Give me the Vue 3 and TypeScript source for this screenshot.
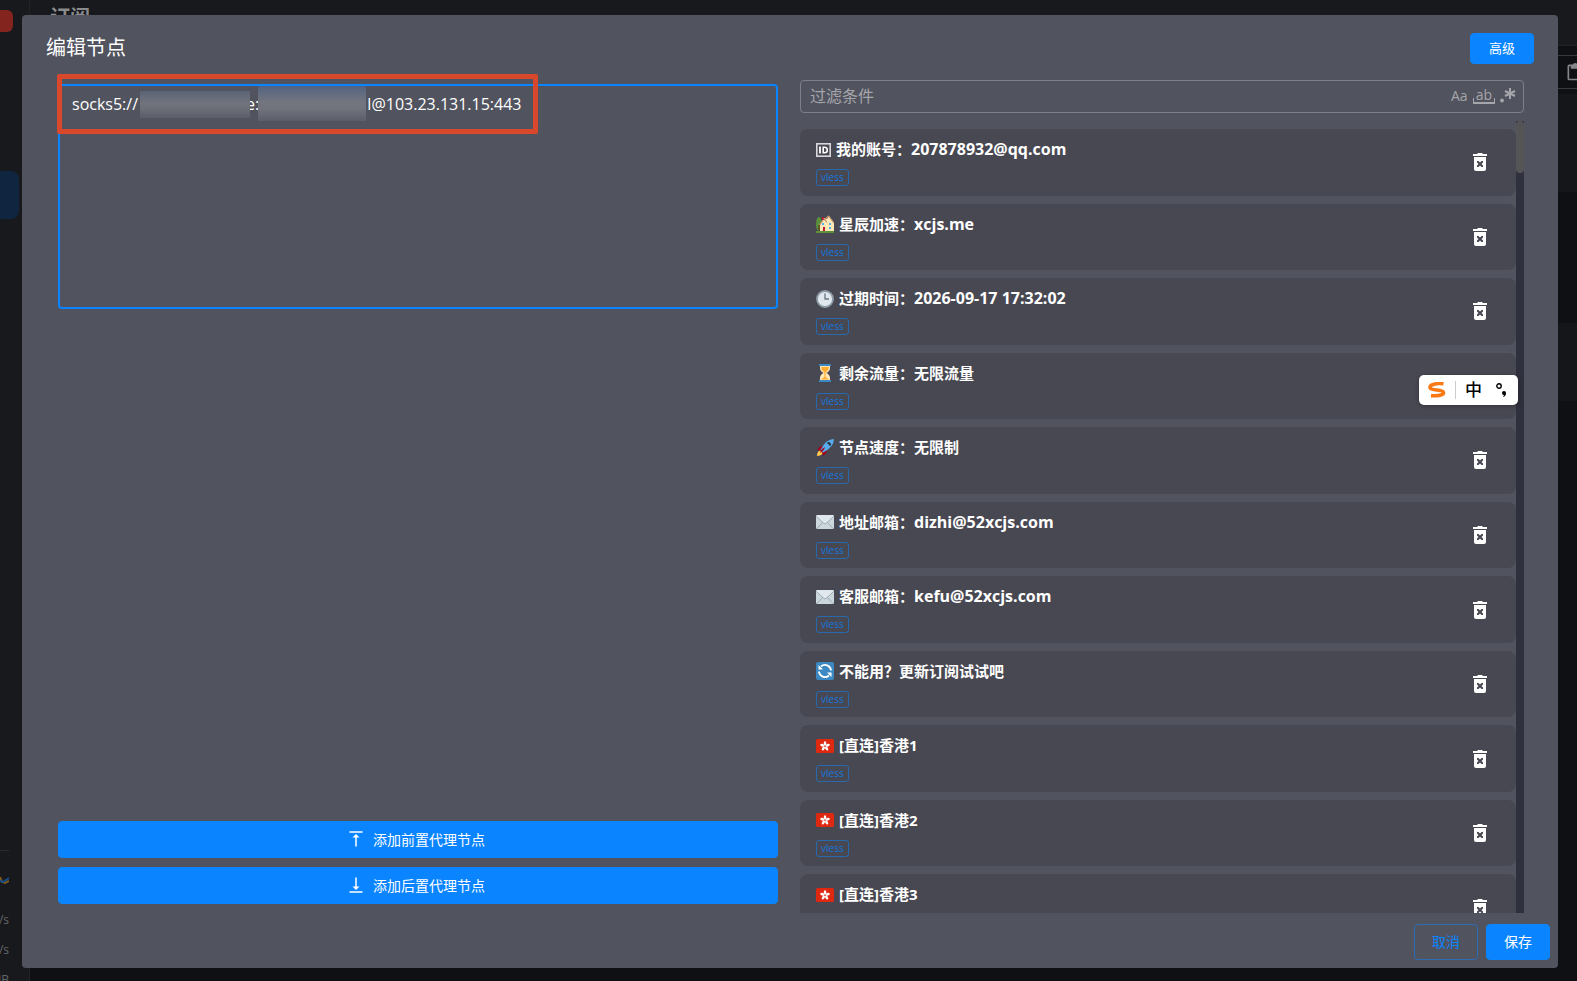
<script setup lang="ts">
import { ref } from 'vue'

interface ProxyNode {
  icon: string
  name: string
  value?: string
}

const link = ref('socks5://' + '\u00a0'.repeat(26) + 'e:' + '\u00a0'.repeat(26) + 'l@103.23.131.15:443')
const filter = ref('')

const nodes: ProxyNode[] = [
  { icon: 'id', name: '我的账号：', value: '207878932@qq.com' },
  { icon: 'house', name: '星辰加速：', value: 'xcjs.me' },
  { icon: 'clock', name: '过期时间：', value: '2026-09-17 17:32:02' },
  { icon: 'hourglass', name: '剩余流量：无限流量' },
  { icon: 'rocket', name: '节点速度：无限制' },
  { icon: 'mail', name: '地址邮箱：', value: 'dizhi@52xcjs.com' },
  { icon: 'mail', name: '客服邮箱：', value: 'kefu@52xcjs.com' },
  { icon: 'refresh', name: '不能用？更新订阅试试吧' },
  { icon: 'flag', name: '[直连]香港1' },
  { icon: 'flag', name: '[直连]香港2' },
  { icon: 'flag', name: '[直连]香港3' },
]
</script>

<template>
  <div class="app">
    <div class="backdrop" aria-hidden="true">
      <div class="side">
        <span class="close-chip"></span>
        <span class="nav-chip"></span>
        <div class="traffic">
          <svg class="wave" viewBox="0 0 9 16"><path d="M0 4l2 5 3 1 4-2" stroke="#7a5a1c" stroke-width="2" fill="none" /><path d="M0 8l3 1 6-4" stroke="#154c8c" stroke-width="2" fill="none" /></svg>
          <span>/s</span>
          <span>/s</span>
          <span>IB</span>
        </div>
      </div>
      <div class="main">
        <div class="page-head">订阅</div>
        <div class="toolbar">
          <svg viewBox="0 0 24 24"><path d="M19 3h-4.200a3 3 0 0 0-5.600 0H5a2 2 0 0 0-2 2v15a2 2 0 0 0 2 2h14a2 2 0 0 0 2-2V5a2 2 0 0 0-2-2zm0 17H5V5h2v3h10V5h2z" fill="#85868a" /></svg>
        </div>
        <div class="strip"></div>
        <div class="card-a"></div>
        <div class="card-b"></div>
      </div>
    </div>

    <section class="dialog" role="dialog" aria-labelledby="dialog-title">
      <header class="head">
        <h2 id="dialog-title">编辑节点</h2>
        <button type="button" class="btn small">高级</button>
      </header>

      <div class="body">
        <div class="left">
          <div class="editor">
            <textarea v-model="link" aria-label="节点链接" spellcheck="false"></textarea>
            <span class="mask mask-user"></span>
            <span class="mask mask-pass"></span>
            <span class="frame"></span>
          </div>
          <div class="stack">
            <button type="button" class="btn wide">
              <svg viewBox="0 0 18 18"><path d="M3 2h12M9 16V6" stroke="#fff" stroke-width="1.500" stroke-linecap="round" fill="none" /><path d="M9 4l3.500 3.500h-7z" fill="#fff" /></svg>
              添加前置代理节点
            </button>
            <button type="button" class="btn wide">
              <svg viewBox="0 0 18 18"><path d="M3 16h12M9 2v10" stroke="#fff" stroke-width="1.500" stroke-linecap="round" fill="none" /><path d="M9 14l3.500-3.500h-7z" fill="#fff" /></svg>
              添加后置代理节点
            </button>
          </div>
        </div>

        <div class="right">
          <div class="filter">
            <input v-model="filter" type="text" placeholder="过滤条件" aria-label="过滤条件" />
            <button type="button" class="opt" aria-label="区分大小写">Aa</button>
            <button type="button" class="opt word" aria-label="全字匹配">ab</button>
            <button type="button" class="opt" aria-label="正则表达式">
              <svg viewBox="0 0 16 16"><circle cx="2" cy="12.500" r="1.900" fill="#a5a6ab" /><path d="M10 0v11M5 3l10 5M15 3L5 8" stroke="#a5a6ab" stroke-width="2" /></svg>
            </button>
          </div>

          <div class="list">
            <ul>
              <li v-for="node in nodes" :key="node.name + node.value">
                <div class="info">
                  <div class="name">
                    <svg v-if="node.icon === 'id'" class="emoji narrow" viewBox="0 0 15 18"><rect x="0.800" y="2.800" width="13.400" height="12.400" fill="none" stroke="#d9d6dc" stroke-width="1.600" /><path d="M4 5.500v7" stroke="#fff" stroke-width="1.800" /><path d="M7.200 6.200v5.600h1.300q2.800 0 2.800-2.800t-2.800-2.800z" fill="none" stroke="#fff" stroke-width="1.600" /></svg>
                    <svg v-else-if="node.icon === 'house'" class="emoji" viewBox="0 0 18 18"><ellipse cx="3" cy="9" rx="3" ry="7" fill="#5c913b" /><path d="M2.600 10h1v6h-1z" fill="#662113" /><path d="M4 10l4-7 3 1 2-3 5 7v8H4z" fill="#ffe8b6" /><path d="M3.500 10L8 3.500l3 4M8 5l4.500-4L18 8" stroke="#c1946c" stroke-width="1.200" fill="none" /><path d="M6 2h1.600v3H6z" fill="#be1931" /><path d="M6 8h2v2H6zm7 0h2v2h-2zm0 4h2v2h-2z" fill="#55acee" /><path d="M7 12h2v4H7z" fill="#be1931" /><path d="M0 16h18v2H0z" fill="#5c913b" /></svg>
                    <svg v-else-if="node.icon === 'clock'" class="emoji" viewBox="0 0 18 18"><circle cx="9" cy="9" r="8" fill="#e1e8ed" stroke="#8d9da8" stroke-width="1.800" /><path d="M9 3.500V9h4" stroke="#66757f" stroke-width="1.300" fill="none" /></svg>
                    <svg v-else-if="node.icon === 'hourglass'" class="emoji" viewBox="0 0 18 18"><path d="M4 2h10v2q0 3-3.500 5 3.500 2 3.500 5v2H4v-2q0-3 3.500-5Q4 7 4 4z" fill="#ffe8b6" /><path d="M5 3h8q0 3-3.400 5.400V13l3.400 2.500H5L8.400 13V8.400Q5 6 5 3z" fill="#ffac33" /><path d="M3 0h12v2H3zm0 16h12v2H3z" fill="#3b88c3" /></svg>
                    <svg v-else-if="node.icon === 'rocket'" class="emoji" viewBox="0 0 18 18"><path d="M1 17q0-4 3-6l3 3q-2 3-6 3z" fill="#ffcc4d" /><path d="M1.500 11q1-4 6-4l-3 5zM7 16.500q4-1 4-6l-5 3z" fill="#a0041e" /><path d="M18 0q-8 0-13.500 11l2.500 2.500Q18 8 18 0z" fill="#55acee" /><path d="M4 14q1-4 5-6-1 4-5 6z" fill="#a0041e" /><path d="M12 3q3 0 3 3l-1.500 1q0-2-2.500-2.500z" fill="#292f33" /></svg>
                    <svg v-else-if="node.icon === 'mail'" class="emoji" viewBox="0 0 18 18"><rect y="2" width="18" height="14" rx="1.500" fill="#ccd6dd" /><path d="M1 15.500l6-6.500M17 15.500L11 9" stroke="#99aab5" fill="none" /><path d="M0 3.500Q0 2 1.500 2h15Q18 2 18 3.500L10 10.500q-1 .8-2 0z" fill="#e1e8ed" /><path d="M.3 3.500L8 10.500q1 .8 2 0l7.700-7" stroke="#99aab5" fill="none" /></svg>
                    <svg v-else-if="node.icon === 'refresh'" class="emoji" viewBox="0 0 18 18"><rect width="18" height="18" rx="2" fill="#3b88c3" /><path d="M15 8.500A6 6 0 0 0 5 4.500M3 9.500a6 6 0 0 0 10 4" stroke="#fff" stroke-width="1.800" fill="none" /><path d="M2.500 3v4.500H7zM15.500 15v-4.500H11z" fill="#fff" /></svg>
                    <svg v-else class="emoji" viewBox="0 0 18 18"><rect y="2" width="18" height="14" rx="1.500" fill="#de2910" /><g fill="#fff"><ellipse v-for="k in 5" :key="k" cx="9" cy="6.400" rx="1.300" ry="2.200" :transform="`rotate(${k * 72} 9 9.200)`" /></g></svg>
                    <span>{{ node.name }}<span v-if="node.value" class="value">{{ node.value }}</span></span>
                  </div>
                  <span class="tag">vless</span>
                </div>
                <button type="button" class="trash" aria-label="删除">
                  <svg viewBox="0 0 14 18"><path d="M0 1h4l1-1h4l1 1h4v2H0z" fill="#fff" /><path fill-rule="evenodd" d="M1 4h12v12a2 2 0 0 1-2 2H3a2 2 0 0 1-2-2zM4 8v1.500L5.500 11 4 12.500V14h1.500L7 12.500 8.500 14H10v-1.500L8.500 11 10 9.500V8H8.500L7 9.500 5.500 8z" fill="#fff" /></svg>
                </button>
              </li>
            </ul>
            <div class="track" aria-hidden="true"><div class="thumb"></div></div>
          </div>
        </div>
      </div>

      <footer class="foot">
        <button type="button" class="btn ghost">取消</button>
        <button type="button" class="btn">保存</button>
      </footer>
    </section>

    <div class="ime">
      <svg class="sogou" viewBox="0 0 18 16"><path d="M15.500 1.800C8 1 2 2.500 2 5.200c0 3.600 13.500 2 13.500 5.500 0 2.300-5 3.600-12.500 2.900" fill="none" stroke="#f97a15" stroke-width="3.600" /></svg>
      <span class="bar"></span>
      <span class="zh">中</span>
      <svg class="punct" viewBox="0 0 10 14"><circle cx="3" cy="3" r="2.200" fill="none" stroke="#000" stroke-width="1.400" /><circle cx="8" cy="10" r="2" fill="#000" /><path d="M10 10q0 3-3 4l1-2z" fill="#000" /></svg>
    </div>
  </div>
</template>

<style>
html,
body {
  margin: 0;
  background: #0f1014;
  overflow: hidden;
}
</style>

<style scoped>
* {
  box-sizing: border-box;
}

.app {
  position: relative;
  height: 100vh;
  padding: 15px 19px 13px 22px;
  overflow: hidden;
  font-family: 'Open Sans', 'Noto Sans CJK SC', sans-serif;
  font-size: 15px;
  color: #fff;
}

button,
input,
textarea {
  font: inherit;
  margin: 0;
}

button {
  cursor: pointer;
}

.backdrop {
  position: absolute;
  inset: 0;
  display: flex;
  overflow: hidden;
}

.side {
  width: 30px;
  flex: none;
  display: flex;
  flex-direction: column;
  background: #18191d;
  border-right: 1px solid #222327;
}

.close-chip {
  width: 13px;
  height: 22px;
  margin-top: 10px;
  border-radius: 0 6px 6px 0;
  background: #84241f;
}

.nav-chip {
  width: 19px;
  height: 48px;
  margin-top: 139px;
  border-radius: 0 8px 8px 0;
  background: #102540;
}

.traffic {
  width: 9px;
  height: 131px;
  margin-top: auto;
  padding-top: 22px;
  display: flex;
  flex-direction: column;
  align-items: flex-end;
  border-top: 1px solid #2a2b2f;
  overflow: hidden;
  font-size: 12px;
  line-height: 30px;
  color: #66676b;
}

.traffic span {
  flex: none;
}

.wave {
  width: 9px;
  height: 16px;
  margin-bottom: 16px;
  flex: none;
}

.main {
  flex: 1;
  display: flex;
  flex-direction: column;
}

.page-head {
  height: 46px;
  padding-left: 20px;
  background: #18191d;
  border-bottom: 1px solid #222327;
  font-size: 20px;
  line-height: 36px;
  font-weight: 700;
  color: #8b8b8d;
}

.toolbar {
  height: 34px;
  margin-top: 9px;
  border: 1px solid #38393d;
  border-width: 1px 0;
  display: flex;
  justify-content: flex-end;
  align-items: center;
}

.toolbar svg {
  width: 20px;
  height: 20px;
  flex: none;
  margin-right: -8px;
}

.strip {
  height: 5px;
}

.card-a {
  height: 98px;
  background: #15161a;
}

.card-b {
  height: 78px;
  margin-top: 131px;
  background: #15161a;
}

.dialog {
  position: relative;
  height: 100%;
  display: flex;
  flex-direction: column;
  background: #51535e;
  border-radius: 4px;
}

.head {
  display: flex;
  justify-content: space-between;
  align-items: flex-start;
  height: 65px;
  flex: none;
  padding: 18px 24px 0;
}

h2 {
  margin: 0;
  font-size: 20px;
  line-height: 30px;
  font-weight: 400;
}

.btn {
  display: flex;
  align-items: center;
  justify-content: center;
  width: 64px;
  height: 36px;
  padding: 0 0 2px;
  border: 1px solid #0a84ff;
  border-radius: 4px;
  background: #0a84ff;
  color: #fff;
  font-size: 14px;
}

.btn.small {
  height: 31px;
  font-size: 13px;
}

.btn.ghost {
  background: transparent;
  border-color: #2b6cb5;
  color: #0a84ff;
}

.btn.wide {
  width: 100%;
  height: 37px;
  gap: 8px;
  padding-right: 4px;
}

.btn.wide svg {
  width: 18px;
  height: 18px;
}

.body {
  flex: 1;
  min-height: 0;
  display: grid;
  grid-template-columns: minmax(0, 720fr) minmax(0, 724fr);
  gap: 22px;
  padding: 0 34px 0 36px;
}

.left {
  display: flex;
  flex-direction: column;
  justify-content: space-between;
  padding: 4px 0 9px;
}

.editor {
  position: relative;
  display: flex;
}

textarea {
  width: 100%;
  height: 225px;
  padding: 6px 12px;
  border: 2px solid #0a84ff;
  border-radius: 4px;
  background: transparent;
  color: #fff;
  font-size: 16px;
  line-height: 24px;
  resize: none;
  outline: none;
}

.mask {
  position: absolute;
  background: linear-gradient(#526381, #73757f 45%, #70727c 65%, #5b5d68);
}

.mask-user {
  left: 82px;
  top: 7px;
  width: 110px;
  height: 27px;
  background: linear-gradient(#5b6475, #71737d 45%, #6b6d77 65%, #5b5d68);
}

.mask-pass {
  left: 200px;
  top: 2px;
  width: 108px;
  height: 35px;
}

.frame {
  position: absolute;
  left: -1px;
  top: -10px;
  width: 481px;
  height: 60px;
  border: 5px solid #d9482d;
  border-radius: 2px;
  pointer-events: none;
}

.stack {
  display: flex;
  flex-direction: column;
  gap: 9px;
}

.right {
  display: flex;
  flex-direction: column;
  min-height: 0;
}

.filter {
  display: flex;
  align-items: center;
  gap: 5px;
  height: 33px;
  flex: none;
  padding: 0 7px 2px 9px;
  border: 1px solid #7e8088;
  border-radius: 4px;
}

.filter input {
  flex: 1;
  min-width: 0;
  padding: 0;
  border: 0;
  background: transparent;
  color: #fff;
  font-size: 16px;
  line-height: 24px;
  outline: none;
}

.filter input::placeholder {
  color: #a5a6ab;
  opacity: 1;
}

.opt {
  padding: 0;
  border: 0;
  background: transparent;
  color: #a5a6ab;
  font-size: 14px;
  line-height: 16px;
}

.opt svg {
  display: block;
  width: 16px;
  height: 16px;
}

.opt.word {
  height: 16px;
  padding: 0 2px;
  line-height: 12px;
  border: solid #a5a6ab;
  border-width: 0 1px 2px;
  border-image: linear-gradient(transparent 70%, #a5a6ab 70%) 1;
}

.list {
  display: flex;
  flex: 1;
  min-height: 0;
  margin-top: 8px;
  overflow: hidden;
}

ul {
  flex: 1;
  display: grid;
  grid-auto-rows: 1fr;
  align-self: flex-start;
  gap: 8px;
  min-height: 820px;
  margin: 0;
  padding: 8px 0 0;
  list-style: none;
}

li {
  display: flex;
  align-items: flex-start;
  justify-content: space-between;
  padding: 0 29px 0 16px;
  border-radius: 8px;
  background: #484852;
}

.info {
  display: flex;
  flex-direction: column;
  align-items: flex-start;
  gap: 7px;
  padding-top: 8px;
}

.name {
  display: flex;
  align-items: center;
  gap: 5px;
  height: 25px;
  font-weight: 700;
  line-height: 25px;
}

.name span {
  white-space: pre;
}

.value {
  font-size: 16px;
}

.emoji {
  width: 18px;
  height: 18px;
}

.emoji.narrow {
  width: 15px;
}

.tag {
  height: 17px;
  padding: 0 4px;
  border: 1px solid #2868ac;
  border-radius: 3px;
  color: #1577de;
  font-size: 10px;
  line-height: 15px;
}

.trash {
  display: flex;
  align-self: center;
  padding: 0;
  border: 0;
  background: transparent;
}

.trash svg {
  width: 14px;
  height: 18px;
}

.track {
  width: 8px;
  flex: none;
  background: #2f303d;
}

.thumb {
  height: 52px;
  border-radius: 4px;
  background: #555555;
}

.foot {
  display: flex;
  justify-content: flex-end;
  gap: 8px;
  flex: none;
  padding: 11px 8px 8px;
}

.ime {
  position: absolute;
  right: 59px;
  top: 375px;
  display: flex;
  align-items: center;
  width: 99px;
  height: 30px;
  padding: 0 12px 0 9px;
  border-radius: 5px;
  background: #fff;
  color: #000;
  box-shadow: 0 1px 4px rgba(0, 0, 0, 0.3);
}

.sogou {
  width: 18px;
  height: 16px;
}

.bar {
  width: 1px;
  height: 18px;
  margin: 0 9px;
  background: #ccc;
}

.zh {
  width: 17px;
  font-size: 17px;
  line-height: 30px;
  font-weight: 500;
}

.punct {
  width: 10px;
  height: 14px;
  margin-left: auto;
}
</style>
